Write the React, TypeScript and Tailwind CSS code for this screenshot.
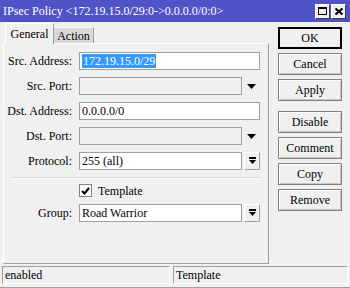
import React from "react";

const font = { fontFamily: '"Liberation Serif", "Times New Roman", serif' };

function Input({ value, disabled, selected, w }: { value?: string; disabled?: boolean; selected?: boolean; w: string }) {
  return (
    <div
      className={`${w} h-[18px] border border-[#a0a0a0] ${disabled ? "bg-[#f0f0f0]" : "bg-white"} flex items-center pl-[2px] text-[12px] leading-[14px] text-black overflow-hidden whitespace-nowrap`}
    >
      {selected ? <span className="bg-[#3399ff] text-white px-[1px]">{value}</span> : value}
    </div>
  );
}

function Arrow() {
  return (
    <div className="w-[18px] h-[18px] flex items-center justify-center">
      <svg width="9" height="5" viewBox="0 0 9 5">
        <polygon points="0,0 9,0 4.5,5" fill="#000" />
      </svg>
    </div>
  );
}

function DropBtn() {
  return (
    <div className="w-[16px] h-[18px] ml-[2px] bg-[#f0f0f0] border border-t-white border-l-white border-r-[#a0a0a0] border-b-[#a0a0a0] flex items-center justify-center">
      <svg width="7" height="8" viewBox="0 0 7 8">
        <rect x="0" y="0" width="7" height="2" fill="#000" />
        <polygon points="0,3 7,3 3.5,7" fill="#000" />
      </svg>
    </div>
  );
}

function Row({ label, children }: { label: string; children: React.ReactNode }) {
  return (
    <div className="flex items-center h-[18px] mb-[7px]">
      <div className="w-[68px] text-right text-[12px] leading-[14px] text-black">{label}</div>
      <div className="w-[7px]" />
      <div className="flex items-center">{children}</div>
    </div>
  );
}

function Btn({ label, def }: { label: string; def?: boolean }) {
  return (
    <div
      className={`w-[64px] h-[22px] flex items-center justify-center text-[12px] text-black bg-[#f0f0f0] ${
        def
          ? "border-2 border-black"
          : "border border-[#808080] shadow-[inset_1px_1px_0_#ffffff,inset_-1px_-1px_0_#c8c8c8]"
      }`}
    >
      {label}
    </div>
  );
}

export default function App() {
  return (
    <div className="w-[350px] h-[288px] bg-[#f0f0f0] flex flex-col overflow-hidden" style={font}>
      {/* title bar */}
      <div className="h-[22px] bg-[#5053c8] flex items-center pl-[3px] pr-[4px]">
        <div className="flex-1 text-white text-[12px] leading-[16px] whitespace-nowrap">
          IPsec Policy &lt;172.19.15.0/29:0-&gt;0.0.0.0/0:0&gt;
        </div>
        <div className="flex gap-[1px]">
          <div className="w-[15px] h-[15px] bg-[#f0f0f0] border border-t-white border-l-white border-r-[#404040] border-b-[#404040] flex items-center justify-center">
            <div className="w-[9px] h-[8px] border border-black border-t-2" />
          </div>
          <div className="w-[15px] h-[15px] bg-[#f0f0f0] border border-t-white border-l-white border-r-[#404040] border-b-[#404040] flex items-center justify-center">
            <svg width="8" height="7" viewBox="0 0 8 7">
              <path d="M0.5 0.5 L7.5 6.5 M7.5 0.5 L0.5 6.5" stroke="#000" strokeWidth="2" />
            </svg>
          </div>
        </div>
      </div>

      <div className="flex flex-1">
        {/* left */}
        <div className="w-[269px] flex flex-col pl-[3px]">
          <div className="h-[21px] flex items-end pl-[2px]">
            <div className="h-[21px] w-[49px] border-t border-l border-white border-r border-r-[#a0a0a0] flex items-center justify-center text-[12px] text-black bg-[#f0f0f0] relative z-10 -mb-[1px] pb-[1px]">
              General
            </div>
            <div className="h-[16px] w-[40px] bg-[#d9d9d9] border-t border-r border-[#a0a0a0] border-t-white flex items-center justify-center text-[12px] text-black">
              Action
            </div>
            <div className="flex-1" />
          </div>
          <div className="h-[221px] border-t border-l border-white border-r border-r-[#a0a0a0] border-b border-b-[#a0a0a0] pt-[8px] flex flex-col">
            <Row label="Src. Address:">
              <Input w="w-[181px]" value="172.19.15.0/29" selected />
            </Row>
            <Row label="Src. Port:">
              <Input w="w-[163px]" disabled />
              <Arrow />
            </Row>
            <Row label="Dst. Address:">
              <Input w="w-[181px]" value="0.0.0.0/0" />
            </Row>
            <Row label="Dst. Port:">
              <Input w="w-[163px]" disabled />
              <Arrow />
            </Row>
            <Row label="Protocol:">
              <Input w="w-[163px]" value="255 (all)" />
              <DropBtn />
            </Row>
            <div className="ml-[8px] w-[247px] h-0 border-t border-[#d4d4d4] border-b border-b-white mt-0 mb-[5px]" />
            <div className="flex items-center h-[13px] mb-[7px] ml-[75px]">
              <div className="w-[13px] h-[13px] bg-white border border-[#808080] flex items-center justify-center">
                <svg width="9" height="8" viewBox="0 0 9 8">
                  <path d="M1 4 L3.5 6.5 L8 1" stroke="#000" strokeWidth="2" fill="none" />
                </svg>
              </div>
              <div className="ml-[6px] text-[12px] text-black">Template</div>
            </div>
            <Row label="Group:">
              <Input w="w-[163px]" value="Road Warrior" />
              <DropBtn />
            </Row>
          </div>
        </div>
        {/* right buttons */}
        <div className="flex flex-col pl-[9px] pt-[5px]">
          <div className="flex flex-col gap-[4px]">
            <Btn label="OK" def />
            <Btn label="Cancel" />
            <Btn label="Apply" />
          </div>
          <div className="flex flex-col gap-[4px] mt-[10px]">
            <Btn label="Disable" />
            <Btn label="Comment" />
            <Btn label="Copy" />
            <Btn label="Remove" />
          </div>
        </div>
      </div>

      {/* status bar */}
      <div className="h-[24px] flex gap-[3px] px-[2px] pt-[2px] pb-[3px] border-b border-[#a0a0a0]">
        <div className="w-[168px] border border-[#a0a0a0] border-r-white border-b-white flex items-center pl-[2px] text-[12px] text-black">
          enabled
        </div>
        <div className="flex-1 border border-[#a0a0a0] border-r-white border-b-white flex items-center pl-[2px] text-[12px] text-black">
          Template
        </div>
      </div>
    </div>
  );
}
